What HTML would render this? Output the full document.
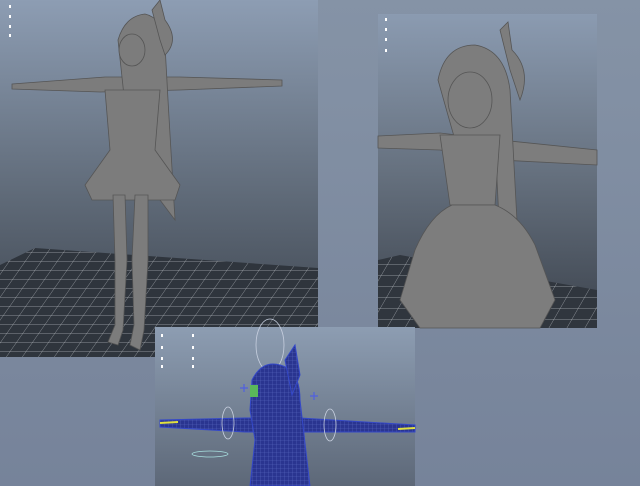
<!DOCTYPE html>
<html><head><meta charset="utf-8"><style>
html,body{margin:0;padding:0;width:640px;height:486px;overflow:hidden;background:#7e8ba0}
svg{display:block}
</style></head><body>
<svg width="640" height="486" viewBox="0 0 640 486" xmlns="http://www.w3.org/2000/svg">
<defs>
<linearGradient id="bg" x1="0" y1="0" x2="0" y2="1">
<stop offset="0" stop-color="#8593a6"/><stop offset="1" stop-color="#76839a"/></linearGradient>
<linearGradient id="vp" x1="0" y1="0" x2="0" y2="1">
<stop offset="0" stop-color="#8d9db3"/><stop offset="0.55" stop-color="#5f6a78"/><stop offset="1" stop-color="#3a414b"/></linearGradient>
<linearGradient id="vp2" x1="0" y1="0" x2="0" y2="1">
<stop offset="0" stop-color="#8b9bb1"/><stop offset="0.5" stop-color="#66717f"/><stop offset="1" stop-color="#3c434d"/></linearGradient>
<linearGradient id="vp3" x1="0" y1="0" x2="0" y2="1">
<stop offset="0" stop-color="#8d9db2"/><stop offset="1" stop-color="#5d6878"/></linearGradient>
<pattern id="grid" width="16" height="9" patternUnits="userSpaceOnUse" patternTransform="skewX(-35)">
<rect width="16" height="9" fill="#2f353d"/><path d="M0 0H16M0 0V9" stroke="#b8bcc2" stroke-width="0.7"/></pattern>
<pattern id="grid2" width="18" height="11" patternUnits="userSpaceOnUse" patternTransform="skewX(-30)">
<rect width="18" height="11" fill="#30363e"/><path d="M0 0H18M0 0V11" stroke="#b8bcc2" stroke-width="0.7"/></pattern>
<pattern id="mesh" width="4" height="4" patternUnits="userSpaceOnUse">
<rect width="4" height="4" fill="#2a3590"/><path d="M0 0H4M0 0V4" stroke="#5868c0" stroke-width="0.6"/></pattern>
</defs>
<rect width="640" height="486" fill="url(#bg)"/>
<rect x="0" y="0" width="318" height="357" fill="url(#vp)"/>
<polygon points="0,265 35,248 318,268 318,357 0,357" fill="url(#grid)"/>
<g fill="#ffffff"><rect x="9" y="5" width="2" height="3"/><rect x="9" y="15" width="2" height="3"/><rect x="9" y="25" width="2" height="3"/><rect x="9" y="34" width="2" height="3"/></g>
<g fill="#7c7c7c" stroke="#555" stroke-width="0.8">
<path d="M12 84 L105 77 L180 77 L282 80 L282 86 L180 90 L100 92 L12 89Z"/>
<path d="M118 40 Q125 16 145 14 Q163 18 165 45 L168 100 L175 220 L160 200 L150 110 L125 105Z"/>
<path d="M105 90 L160 90 L155 150 L180 185 L175 200 L92 200 L85 185 L110 150Z"/>
<path d="M113 195 L125 195 L127 260 L123 330 L118 345 L108 342 L115 325 L115 260Z"/>
<path d="M135 195 L148 195 L148 260 L144 330 L140 350 L130 345 L134 325 L132 260Z"/>
<ellipse cx="132" cy="50" rx="13" ry="16"/>
<path d="M152 10 L160 0 L165 20 Q180 40 165 55 L160 40Z"/>
</g>
<rect x="378" y="14" width="219" height="314" fill="url(#vp2)"/>
<polygon points="378,260 400,255 597,290 597,328 378,328" fill="url(#grid2)"/>
<g fill="#ffffff"><rect x="385" y="18" width="2" height="3"/><rect x="385" y="28" width="2" height="3"/><rect x="385" y="38" width="2" height="3"/><rect x="385" y="49" width="2" height="3"/></g>
<g fill="#7d7d7d" stroke="#555" stroke-width="0.8">
<path d="M378 136 L440 133 L500 140 L597 150 L597 165 L500 160 L440 150 L378 148Z"/>
<path d="M438 80 Q445 45 475 45 Q505 50 510 90 L518 240 L500 240 L495 140 L455 140Z"/>
<path d="M440 135 L500 135 L495 205 L450 205Z"/>
<path d="M452 205 L495 205 Q520 215 535 245 L555 300 L540 328 L420 328 L400 300 L415 250 Q430 215 452 205Z"/>
<ellipse cx="470" cy="100" rx="22" ry="28"/>
<path d="M500 30 L508 22 L512 50 Q532 70 520 100 L510 70Z"/>
</g>
<rect x="155" y="327" width="260" height="159" fill="url(#vp3)"/>
<g fill="#ffffff"><rect x="161" y="334" width="2" height="3"/><rect x="161" y="346" width="2" height="3"/><rect x="161" y="357" width="2" height="3"/><rect x="161" y="365" width="2" height="3"/><rect x="192" y="334" width="2" height="3"/><rect x="192" y="346" width="2" height="3"/><rect x="192" y="357" width="2" height="3"/><rect x="192" y="365" width="2" height="3"/></g>
<ellipse cx="270" cy="345" rx="14" ry="26" fill="none" stroke="#c8d0e0" stroke-width="0.8"/>
<g fill="url(#mesh)" stroke="#3448c8" stroke-width="1">
<path d="M160 420 L245 418 L300 418 L415 425 L415 432 L300 432 L245 432 L160 427Z"/>
<path d="M252 380 Q262 360 280 365 Q300 370 300 400 L310 486 L250 486 L255 440 L250 410Z"/>
<path d="M285 360 L295 345 L300 375 L292 395Z"/>
</g>
<ellipse cx="228" cy="423" rx="6" ry="16" fill="none" stroke="#c8d0e0" stroke-width="0.8"/>
<ellipse cx="330" cy="425" rx="6" ry="16" fill="none" stroke="#c8d0e0" stroke-width="0.8"/>
<ellipse cx="210" cy="454" rx="18" ry="3" fill="none" stroke="#a8e0e0" stroke-width="0.8"/>
<rect x="250" y="385" width="8" height="12" fill="#5ab85a"/>
<path d="M240 388h8M244 384v8M310 396h8M314 392v8" stroke="#5060e0" stroke-width="1.2"/>
<path d="M160 423 L178 422" stroke="#e0e040" stroke-width="2"/>
<path d="M398 429 L415 428" stroke="#e0e040" stroke-width="2"/>
</svg>
</body></html>
